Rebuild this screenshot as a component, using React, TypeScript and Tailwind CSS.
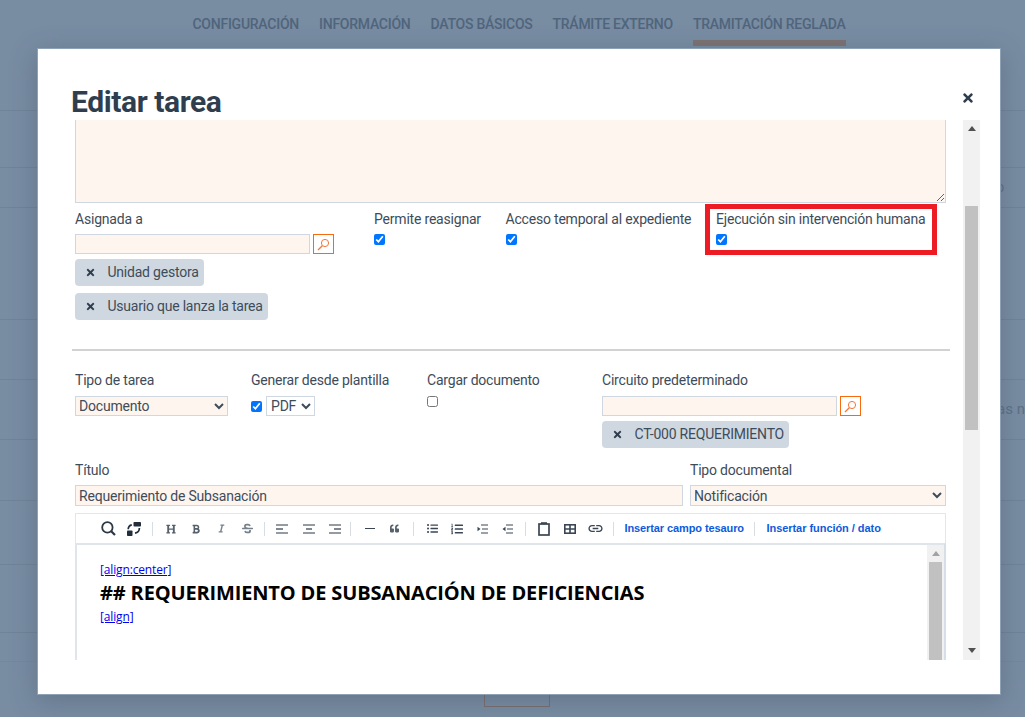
import React from "react";
import { FaTimes, FaHeading, FaBold, FaItalic, FaStrikethrough, FaQuoteLeft, FaListUl, FaListOl } from "react-icons/fa";
import { MdLink } from "react-icons/md";

const Lens = () => (
  <svg width="15" height="15" viewBox="0 0 15 15" fill="none" stroke="#f4763a" strokeWidth="1">
    <circle cx="9" cy="6" r="3.6" />
    <path d="M6.3 8.7 L2 13" strokeWidth="1.3" />
  </svg>
);

const AlignIcon = ({ mode }: { mode: "l" | "c" | "r" }) => (
  <svg width="12" height="10" viewBox="0 0 12 10" fill="none" stroke="#2d3846" strokeWidth="1.2">
    <path d="M0 1H12M0 9H12" />
    {mode === "l" && <path d="M0 5H7" />}
    {mode === "c" && <path d="M3 5H9" />}
    {mode === "r" && <path d="M5 5H12" />}
  </svg>
);

const Spell = () => (
  <svg width="14" height="14" viewBox="0 0 14 14" fill="#232e3b">
    <rect x="6.500" y="0" width="7.500" height="4.500" rx="0.800" />
    <rect x="0" y="8.500" width="5.500" height="5.500" rx="0.800" />
    <path d="M1.200 7.200C1.300 5 2.500 3.200 4.800 2.800" fill="none" stroke="#232e3b" strokeWidth="1.700" />
    <path d="M12.400 6C12.400 8.600 11 10.700 8 11.200" fill="none" stroke="#232e3b" strokeWidth="1.700" />
  </svg>
);

const Clip = () => (
  <svg width="12" height="14" viewBox="0 0 12 14" fill="none" stroke="#3a4654" strokeWidth="1.7">
    <rect x="1" y="2" width="10" height="11" />
    <path d="M3 1.2H9" strokeWidth="2" />
  </svg>
);

const SearchThin = () => (
  <svg width="15" height="15" viewBox="0 0 15 15" fill="none" stroke="#2d3846" strokeWidth="1.8">
    <circle cx="6.4" cy="6.4" r="5.2" />
    <path d="M10.2 10.2 L14 14" strokeWidth="2.2" />
  </svg>
);

const TableIcon = () => (
  <svg width="12" height="10" viewBox="0 0 12 10" fill="none" stroke="#3a4654" strokeWidth="1.6">
    <rect x="0.8" y="0.8" width="10.4" height="8.4" />
    <path d="M6 1V9M1 5H11" />
  </svg>
);

const IndentIcon = ({ out = false }: { out?: boolean }) => (
  <svg width="11" height="10" viewBox="0 0 11 10" fill="none" stroke="#3a4654" strokeWidth="1.1">
    <path d="M4 1H11M5 5H11M4 9H11" />
    <path d={out ? "M3.500 2.800V7.200L0.500 5z" : "M0.500 2.800V7.200L3.500 5z"} fill="#3a4654" stroke="none" />
  </svg>
);

const Label = ({ children }: { children: React.ReactNode }) => (
  <div className="h-[21px] text-[14px] leading-[21px] whitespace-nowrap">{children}</div>
);

const Tag = ({ children, className = "" }: { children: React.ReactNode; className?: string }) => (
  <div className={`flex h-[27px] w-fit items-center rounded-[4px] bg-[#cfd8e1] pl-[10px] pr-[5px] text-[14px] tracking-[-0.22px] whitespace-nowrap ${className}`}>
    <FaTimes className="mr-[11.500px] shrink-0 text-[#2f3e4e]" size={11} />
    {children}
  </div>
);

const SearchField = ({ width }: { width: string }) => (
  <div className="flex h-[20px] gap-[3px]">
    <input className={`h-[20px] ${width} border border-[#cfd8e1] bg-[#fef5ef]`} />
    <button className="flex h-[20px] w-[21px] items-center justify-center border border-[#f76b0d]">
      <Lens />
    </button>
  </div>
);

const Check = ({ checked = false }: { checked?: boolean }) => (
  <input type="checkbox" defaultChecked={checked} className="m-0 block h-[11px] w-[11px]" />
);

const Sep = ({ className = "" }: { className?: string }) => (
  <span className={`h-[14px] w-px shrink-0 bg-[#d8dde2] ${className}`} />
);

const Tool = ({ children, className = "w-[25px]" }: { children: React.ReactNode; className?: string }) => (
  <span className={`flex shrink-0 items-center justify-center text-[#3a4654] ${className}`}>{children}</span>
);

const Row = ({ className, children }: { className: string; children?: React.ReactNode }) => (
  <div className={`flex items-center justify-end overflow-hidden border-b border-[#6f8399] text-[14px] text-[#5d7087] ${className}`}>
    {children}
  </div>
);

export default function App() {
  return (
    <div className="relative h-[717px] w-[1025px] overflow-hidden bg-[#788ca2] font-['Roboto',sans-serif] tracking-[-0.2px] text-[#3e4c5a]">
      <nav className="flex h-[46px] justify-center gap-[20px] pt-[15px] pl-[13px] text-[14px] leading-[18px] font-medium tracking-[-0.25px] text-[#50657c] uppercase">
        <span>Configuración</span>
        <span>Información</span>
        <span>Datos básicos</span>
        <span>Trámite externo</span>
        <span className="h-[31px] border-b-[6px] border-[#7c7272]">Tramitación reglada</span>
      </nav>
      <Row className="h-[65px]" />
      <Row className="h-[57px]" />
      <Row className="h-[40px]">
        <span className="mr-[21px]">o</span>
      </Row>
      <Row className="h-[112px]" />
      <Row className="h-[60px]" />
      <Row className="h-[60px] text-[15px] tracking-normal">as n</Row>
      <Row className="h-[61px]" />
      <Row className="h-[64px]" />
      <Row className="h-[68px]" />
      <Row className="h-[29px] border-[#74889e]" />
      <div className="flex justify-center pt-[17px] pl-[9px]">
        <button className="h-[28px] w-[66px] border border-[#7a6e6e] pb-[4px] text-[13px] text-[#64788e]">Cerrar</button>
      </div>

      <div className="absolute top-[48px] left-[37px] flex h-[647px] w-[964px] flex-col border border-[#8fa1b4] bg-white shadow-[0_6px_24px_rgba(60,75,95,0.35)]">
        <header className="flex h-[71px] shrink-0 justify-between pl-[33px]">
          <h1 className="pt-[36px] text-[30px] leading-[34px] font-bold tracking-[-0.4px] text-[#2f3e4e]">Editar tarea</h1>
          <FaTimes className="mt-[42px] mr-[25px] text-[#2f3e4e]" size={14} />
        </header>
        <div className="flex h-[540px] shrink-0 pr-[20px]">
          <div className="flex-1 overflow-hidden pl-[34px]">
            <textarea className="-mt-[2px] ml-[3px] block h-[85px] w-[871px] resize border border-[#cfd8e1] bg-[#fef5ef]" />

            <div className="mt-[6px] flex pl-[3px]">
              <div className="w-[299px]">
                <Label>Asignada a</Label>
                <div className="mt-[4px]"><SearchField width="w-[235px]" /></div>
                <Tag className="mt-[5px]">Unidad gestora</Tag>
                <Tag className="mt-[7px]">Usuario que lanza la tarea</Tag>
              </div>
              <div className="w-[131.5px]">
                <Label>Permite reasignar</Label>
                <div className="mt-[4px]"><Check checked /></div>
              </div>
              <div className="w-[210.5px]">
                <Label>Acceso temporal al expediente</Label>
                <div className="mt-[4px]"><Check checked /></div>
              </div>
              <div className="relative">
                <Label>Ejecución sin intervención humana</Label>
                <div className="mt-[4px]"><Check checked /></div>
                <div className="absolute -top-[5px] -left-[11px] h-[51px] w-[232px] border-[5px] border-[#ed1c24]" />
              </div>
            </div>

            <hr className="mt-[29px] h-[2px] w-[878px] border-0 bg-[#d2d2d2]" />

            <div className="mt-[19px] flex pl-[3px]">
              <div className="w-[176px]">
                <Label>Tipo de tarea</Label>
                <select className="mt-[5px] block h-[20px] w-[153px] border border-[#cfd8e1] bg-[#fef5ef] indent-[-1px] text-[14px]">
                  <option>Documento</option>
                </select>
              </div>
              <div className="w-[176px]">
                <Label>Generar desde plantilla</Label>
                <div className="mt-[5px] flex h-[20px] items-center gap-[4px]">
                  <Check checked />
                  <select className="block h-[20px] w-[49px] border border-[#cfd8e1] bg-white text-[14px]">
                    <option>PDF</option>
                  </select>
                </div>
              </div>
              <div className="w-[175px]">
                <Label>Cargar documento</Label>
                <div className="mt-[5px]"><Check /></div>
              </div>
              <div>
                <Label>Circuito predeterminado</Label>
                <div className="mt-[5px]"><SearchField width="w-[235px]" /></div>
                <Tag className="mt-[5px] tracking-[-0.3px]">CT-000 REQUERIMIENTO</Tag>
              </div>
            </div>

            <div className="mt-[12px] flex pl-[3px]">
              <div className="w-[615px]">
                <Label>Título</Label>
                <input readOnly value="Requerimiento de Subsanación" className="mt-[4px] block h-[21px] w-[608px] border border-[#cfd8e1] bg-[#fef5ef] px-[3px] pt-[1px] text-[14px]" />
              </div>
              <div>
                <Label>Tipo documental</Label>
                <select className="mt-[4px] block h-[21px] w-[256px] border border-[#cfd8e1] bg-[#fef5ef] indent-[-1px] text-[14px]">
                  <option>Notificación</option>
                </select>
              </div>
            </div>

            <div className="mt-[7px] ml-[3px] flex h-[30px] w-[871px] items-center border border-b-0 border-[#e3e6ea] pl-[20px]">
              <Tool><SearchThin /></Tool>
              <Tool><Spell /></Tool>
              <Sep className="mr-[5px] ml-[6px]" />
              <Tool className="w-[25.5px]"><FaHeading size={10} className="text-[#55606b]" /></Tool>
              <Tool className="w-[25.5px]"><FaBold size={10} className="text-[#55606b]" /></Tool>
              <Tool className="w-[25.5px]"><FaItalic size={9} className="text-[#76808b]" /></Tool>
              <Tool className="w-[25.5px]"><FaStrikethrough size={11} className="text-[#76808b]" /></Tool>
              <Sep className="mr-[3px] ml-[4px]" />
              <Tool className="w-[27px]"><AlignIcon mode="l" /></Tool>
              <Tool className="w-[27px]"><AlignIcon mode="c" /></Tool>
              <Tool className="w-[26.500px]"><AlignIcon mode="r" /></Tool>
              <Sep className="mr-[6px] ml-[1.500px]" />
              <Tool><span className="h-[1.5px] w-[10px] bg-[#3a4654]" /></Tool>
              <Tool><FaQuoteLeft size={9} className="text-[#55606b]" /></Tool>
              <Sep className="mr-[6px] ml-[6px]" />
              <Tool><FaListUl size={11} /></Tool>
              <Tool className="w-[24.500px]"><FaListOl size={12} /></Tool>
              <Tool className="w-[25.500px]"><IndentIcon /></Tool>
              <Tool><IndentIcon out /></Tool>
              <Sep className="mr-[5px] ml-[5px]" />
              <Tool className="w-[26px]"><Clip /></Tool>
              <Tool className="w-[26px]"><TableIcon /></Tool>
              <Tool className="w-[25.500px]"><MdLink size={17} /></Tool>
              <Sep className="ml-[4px]" />
              <span className="ml-[11px] font-['Liberation_Sans',sans-serif] text-[11px] font-bold tracking-[-0.1px] whitespace-nowrap text-[#0d5bdc]">Insertar campo tesauro</span>
              <Sep className="ml-[10px]" />
              <span className="ml-[11.500px] font-['Liberation_Sans',sans-serif] text-[11px] font-bold tracking-[-0.05px] whitespace-nowrap text-[#0d5bdc]">Insertar función / dato</span>
            </div>

            <div className="ml-[3px] flex h-[130px] w-[871px] border-2 border-b-0 border-[#dfe5eb] border-r-[#d6dfe8]">
              <div className="flex-1 pt-[17px] pl-[23px] font-['Open_Sans',sans-serif] tracking-[-0.15px] text-black">
                <div className="text-[12px] leading-[16px]"><a href="#" className="text-[#0000ee] underline">[align:center]</a></div>
                <div className="mt-[1px] text-[20px] leading-[27px] font-bold">## REQUERIMIENTO DE SUBSANACIÓN DE DEFICIENCIAS</div>
                <div className="mt-[3px] text-[12px] leading-[16px]"><a href="#" className="text-[#0000ee] underline">[align]</a></div>
              </div>
              <div className="flex w-[17px] flex-col items-center bg-[#f1f1f1]">
                <svg className="mt-[6px]" width="8" height="5" viewBox="0 0 8 5"><path d="M4 0 8 5H0z" fill="#a3a3a3" /></svg>
                <div className="mt-[6px] w-[13px] flex-1 bg-[#c1c1c1]" />
              </div>
            </div>
          </div>

          <div className="flex w-[17px] shrink-0 flex-col items-center bg-[#f1f1f1]">
            <svg className="mt-[6px]" width="8" height="5" viewBox="0 0 8 5"><path d="M4 0 8 5H0z" fill="#505050" /></svg>
            <div className="mt-[75px] h-[224px] w-[13px] bg-[#c1c1c1]" />
            <div className="flex-1" />
            <svg className="mb-[7px]" width="8" height="5" viewBox="0 0 8 5"><path d="M0 0H8L4 5z" fill="#505050" /></svg>
          </div>
        </div>
      </div>
    </div>
  );
}
